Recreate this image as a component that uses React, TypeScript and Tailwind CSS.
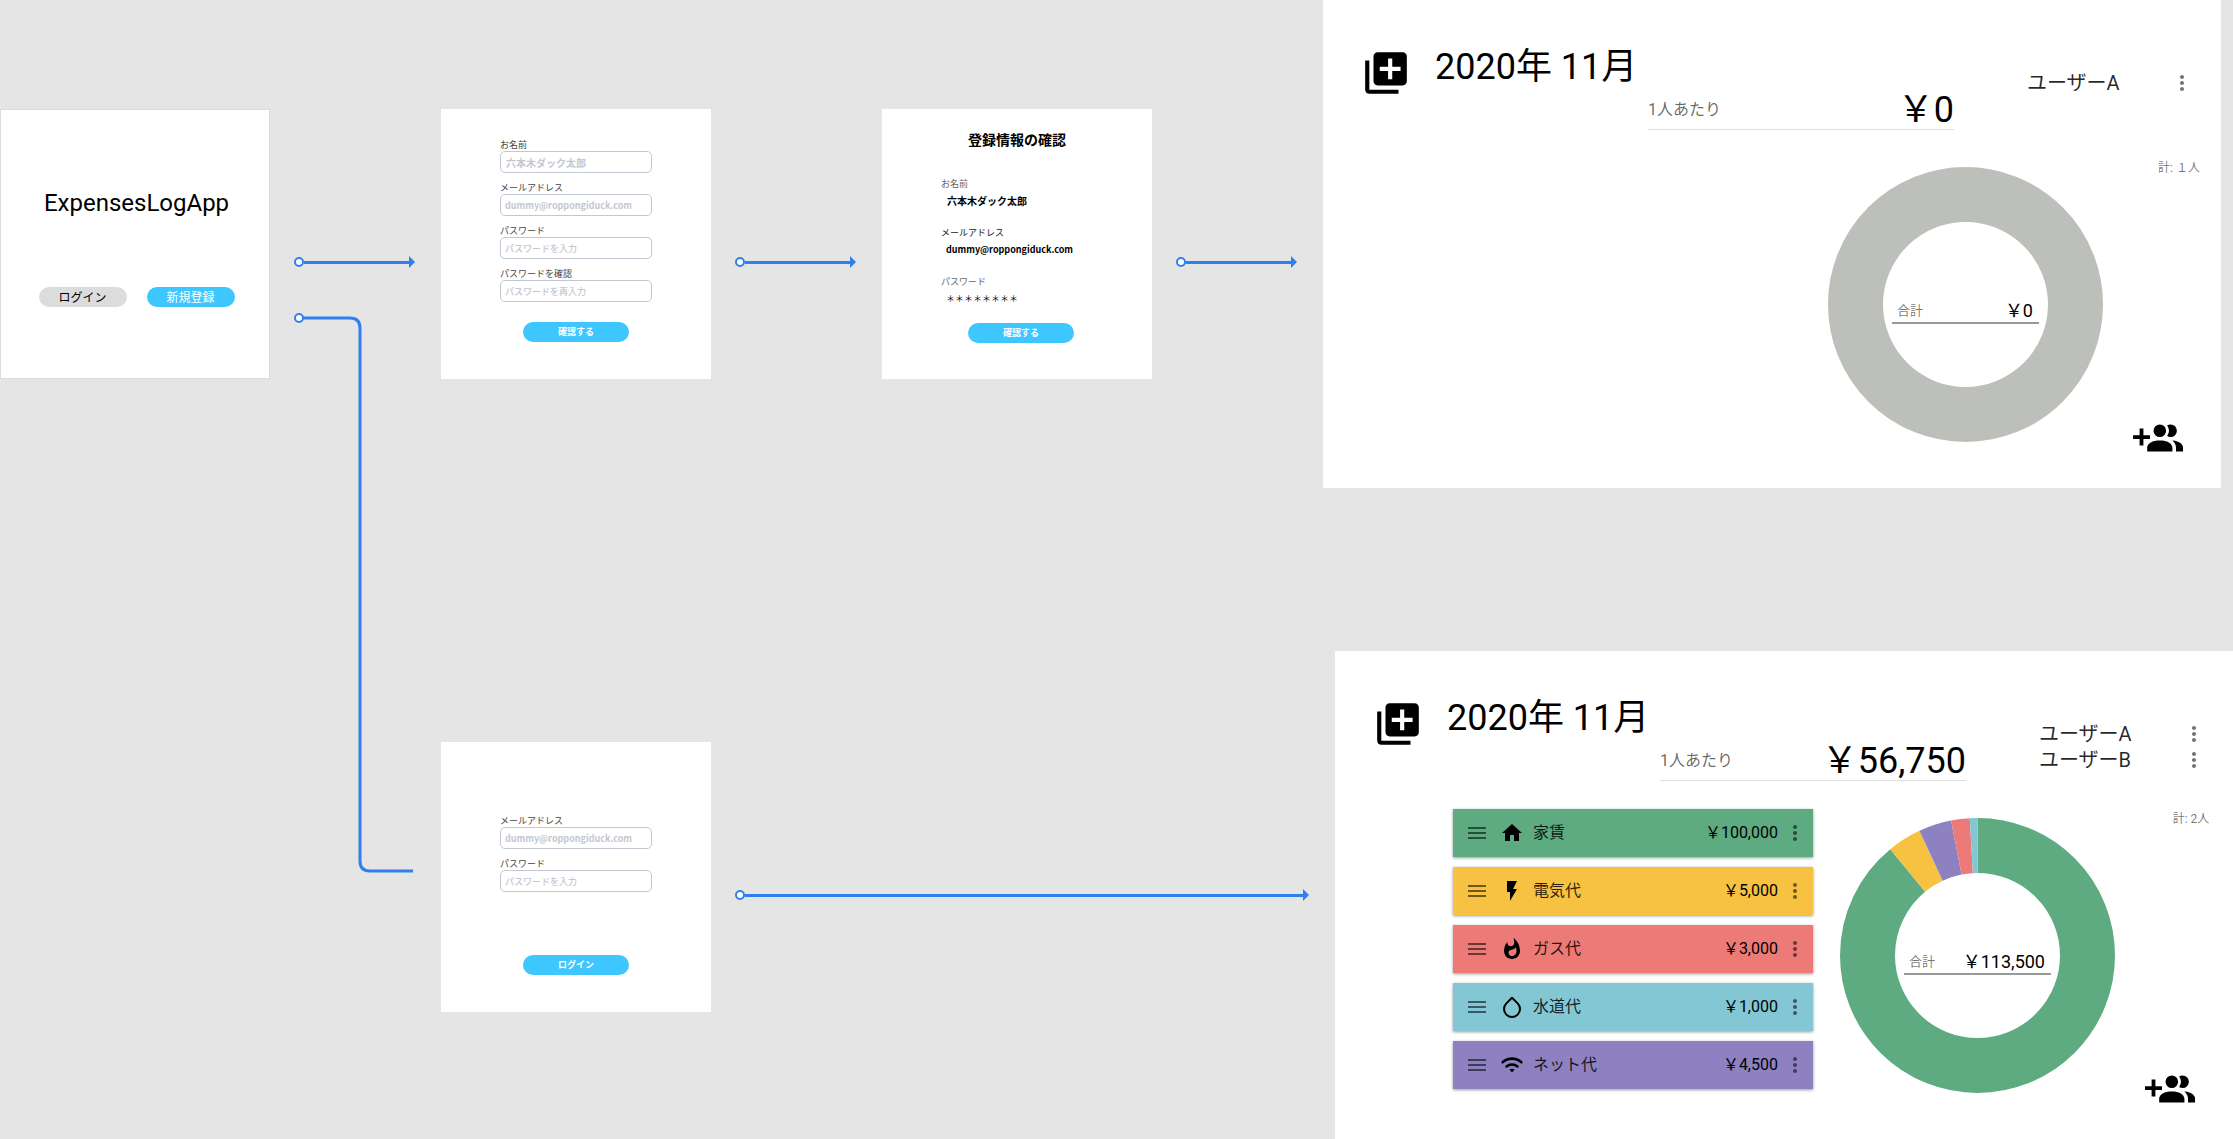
import React, { useId } from "react";
import { MdFlashOn, MdHome, MdLibraryAdd, MdMenu, MdMoreVert, MdWhatshot } from "react-icons/md";

const BLUE = "#2f80ed";

function Connector({ className }: { className: string }) {
  return (
    <div className={"absolute flex h-3 items-center " + className}>
      <span className="size-[10px] shrink-0 rounded-full border-2 border-[#2f80ed] bg-white" />
      <span className="h-[3px] grow bg-[#2f80ed]" />
      <svg className="h-3 w-[6px] shrink-0" viewBox="0 0 6 12" aria-hidden="true">
        <path d="M0 0L6 6L0 12Z" fill={BLUE} />
      </svg>
    </div>
  );
}

function ElbowConnector() {
  return (
    <svg className="absolute left-[294px] top-[313px] h-[564px] w-[120px]" viewBox="0 0 120 564" fill="none" aria-hidden="true">
      <path d="M9 5H56Q66 5 66 15V548Q66 558 76 558H119" stroke={BLUE} strokeWidth="3" />
      <circle cx="5" cy="5" r="4" fill="#fff" stroke={BLUE} strokeWidth="2" />
    </svg>
  );
}

function DropIcon() {
  return (
    <svg className="size-6" viewBox="0 0 24 24" fill="none" stroke="currentColor" strokeWidth="2" strokeLinejoin="round" strokeLinecap="round" aria-hidden="true">
      <path d="M12 2.69l5.66 5.66a8 8 0 1 1-11.31 0z" />
    </svg>
  );
}

function WifiIcon() {
  return (
    <svg className="size-6" viewBox="0 0 24 24" fill="none" stroke="currentColor" strokeWidth="2.6" strokeLinecap="round" aria-hidden="true">
      <path d="M2.6 9.2C8 4.4 16 4.4 21.4 9.2" />
      <path d="M6.5 13.4C9.6 10.8 14.4 10.8 17.5 13.4" />
      <path d="M9.4 16.6C10.9 15.3 13.1 15.3 14.6 16.6L12 19.6Z" fill="currentColor" stroke="none" />
    </svg>
  );
}

function AddMembersIcon() {
  return (
    <svg className="h-7 w-[50px]" viewBox="0 0 50 28" fill="currentColor" aria-hidden="true">
      <path d="M0 11.2H6.6V4.4H10.4V11.2H17V15H10.4V21.4H6.6V15H0Z" />
      <g transform="translate(10.6 -6.8) scale(1.8)">
        <path d="M16 17V19H2V17S2 13 9 13 16 17 16 17M12.5 7.5A3.5 3.5 0 1 0 9 11A3.5 3.5 0 0 0 12.5 7.5M15.94 13A5.32 5.32 0 0 1 18 17V19H22V17S22 13.37 15.94 13M15 4A3.39 3.39 0 0 0 13.07 4.59A5 5 0 0 1 13.07 10.41A3.39 3.39 0 0 0 15 11A3.5 3.5 0 0 0 15 4Z" />
      </g>
    </svg>
  );
}

type FieldProps = { label: string; placeholder: string; type: string };

const inputText: Record<string, string> = {
  text: "px-[5px] text-[10px] font-bold",
  email: "px-1 text-[9px] font-bold",
  password: "px-1 text-[9px] font-medium",
};

function Field({ label, placeholder, type }: FieldProps) {
  const id = useId();
  return (
    <div className="flex flex-col">
      <label htmlFor={id} className="h-[14px] text-[9px] leading-4 text-[#444]">
        {label}
      </label>
      <input
        id={id}
        type={type}
        placeholder={placeholder}
        className={
          "h-[22px] w-full rounded-[5px] border border-[#c3c7d1] bg-white outline-none placeholder:text-[#c3c7d1] " +
          inputText[type]
        }
      />
    </div>
  );
}

function PrimaryButton({ children }: { children: React.ReactNode }) {
  return (
    <button type="button" className="block h-5 w-[106px] rounded-full bg-[#3ec6ff] text-[9px] font-bold text-white">
      {children}
    </button>
  );
}

const dashboardItems = [
  { name: "家賃", amount: "￥100,000", bg: "bg-[#5eab81]", icon: <MdHome className="size-6" /> },
  { name: "電気代", amount: "￥5,000", bg: "bg-[#f7c242]", icon: <MdFlashOn className="size-6" /> },
  { name: "ガス代", amount: "￥3,000", bg: "bg-[#ec7a77]", icon: <MdWhatshot className="size-6" /> },
  { name: "水道代", amount: "￥1,000", bg: "bg-[#82c7d3]", icon: <DropIcon /> },
  { name: "ネット代", amount: "￥4,500", bg: "bg-[#8d81c2]", icon: <WifiIcon /> },
];
type Item = (typeof dashboardItems)[number];

// Sweep of each slice in degrees, clockwise from the top.
const slices = [
  { color: "#5eab81", degrees: 320.6 },
  { color: "#f7c242", degrees: 14.4 },
  { color: "#8d81c2", degrees: 13.9 },
  { color: "#ec7a77", degrees: 7.8 },
  { color: "#82c7d3", degrees: 3.3 },
];
const emptySlices = [{ color: "#bdbfba", degrees: 360 }];
type Slice = (typeof slices)[number];

function Donut({ data, total }: { data: Slice[]; total: string }) {
  let start = 0;
  return (
    <div className="relative mt-[9px] size-[275px] shrink-0">
      <svg className="size-full -rotate-90" viewBox="0 0 275 275" fill="none" aria-hidden="true">
        {data.map((d) => {
          const offset = start;
          start += d.degrees;
          return (
            <circle
              key={d.color}
              cx="137.5"
              cy="137.5"
              r="110"
              stroke={d.color}
              strokeWidth="55"
              pathLength={360}
              strokeDasharray={`${d.degrees} ${360 - d.degrees}`}
              strokeDashoffset={-offset}
            />
          );
        })}
      </svg>
      <div className="absolute inset-x-16 top-[133px] flex h-[24px] items-center justify-between border-b-2 border-[#999] pl-[5px] pr-[6px]">
        <span className="text-[13px] text-black/55">合計</span>
        <span className="text-lg text-black">{total}</span>
      </div>
    </div>
  );
}

type DashboardProps = {
  className: string;
  perPerson: string;
  users: string[];
  count: string;
  total: string;
  items: Item[];
  data: Slice[];
};

function Dashboard({ className, perPerson, users, count, total, items, data }: DashboardProps) {
  return (
    <section className={"absolute flex w-[898px] flex-col bg-white pb-[36px] " + className}>
      <header className="flex items-start pr-[27px]">
        <button type="button" aria-label="追加" className="ml-[38px] mt-12">
          <MdLibraryAdd className="size-[50px]" />
        </button>
        <h1 className="ml-6 mt-[46px] w-[213px] whitespace-nowrap text-4xl leading-[42px]">2020年 11月</h1>
        <div className="mt-[90px] flex h-[40px] w-[306px] items-center justify-between border-b border-[#dedede]">
          <span className="text-base text-black/60">1人あたり</span>
          <span className="text-4xl">{perPerson}</span>
        </div>
        <ul className="ml-[73px] mt-[70px] h-[60px] grow">
          {users.map((user) => (
            <li key={user} className="flex h-[26px] items-center justify-between text-xl text-black/85">
              {user}
              <button type="button" aria-label={user + "のメニュー"} className="text-black/55">
                <MdMoreVert className="size-6" />
              </button>
            </li>
          ))}
        </ul>
      </header>
      <div className="mt-7 flex justify-end">
        {items.length > 0 && (
          <ul className="mr-[27px] flex w-[360px] flex-col gap-[10px]">
            {items.map((item) => (
              <li
                key={item.name}
                className={"flex h-12 items-center pl-3 pr-[6px] shadow-[0_1px_3px_rgba(0,0,0,0.4)] " + item.bg}
              >
                <MdMenu className="size-6 text-black/55" />
                <span className="ml-[11px]">{item.icon}</span>
                <span className="ml-[9px] grow text-base text-black/85">{item.name}</span>
                <span className="text-base">{item.amount}</span>
                <button type="button" aria-label={item.name + "のメニュー"} className="ml-[5px] text-black/55">
                  <MdMoreVert className="size-6" />
                </button>
              </li>
            ))}
          </ul>
        )}
        <Donut data={data} total={total} />
        <aside className="flex h-[294px] w-[118px] flex-col justify-between pl-[30px] pr-[10px]">
          <p className="w-16 self-end text-center text-xs leading-5 text-black/55">{count}</p>
          <button type="button" aria-label="メンバーを追加" className="self-start">
            <AddMembersIcon />
          </button>
        </aside>
      </div>
    </section>
  );
}

const confirmation = [
  { label: "お名前", value: "六本木ダック太郎", labelClass: "text-[#666]", valueClass: "pl-[6px] text-[10px] font-bold" },
  { label: "メールアドレス", value: "dummy@roppongiduck.com", labelClass: "text-[#222]", valueClass: "pl-[5px] text-[9px] font-bold" },
  { label: "パスワード", value: "＊＊＊＊＊＊＊＊", labelClass: "text-[#666]", valueClass: "pl-[5px] text-[9px]" },
];

export default function App() {
  return (
    <main className="relative min-h-screen w-full overflow-hidden bg-[#e5e5e5] font-['Noto_Sans_CJK_JP',sans-serif] text-black">
      <section className="absolute left-0 top-[109px] flex size-[270px] flex-col items-center border border-[#dcdcdc] bg-white pl-[3px] pt-[79px]">
        <h1 className="font-[Roboto,sans-serif] text-2xl leading-7">ExpensesLogApp</h1>
        <div className="mt-[70px] flex gap-5">
          <button type="button" className="h-5 w-[88px] rounded-full bg-[#dcdcdc] text-xs">
            ログイン
          </button>
          <button type="button" className="h-5 w-[88px] rounded-full bg-[#3ec6ff] text-xs text-white">
            新規登録
          </button>
        </div>
      </section>

      <form className="absolute left-[441px] top-[109px] flex size-[270px] flex-col items-center bg-white px-[59px] pt-7">
        <div className="mb-5 flex w-full flex-col gap-[7px]">
          <Field label="お名前" placeholder="六本木ダック太郎" type="text" />
          <Field label="メールアドレス" placeholder="dummy@roppongiduck.com" type="email" />
          <Field label="パスワード" placeholder="パスワードを入力" type="password" />
          <Field label="パスワードを確認" placeholder="パスワードを再入力" type="password" />
        </div>
        <PrimaryButton>確認する</PrimaryButton>
      </form>

      <section className="absolute left-[882px] top-[109px] flex size-[270px] flex-col bg-white pt-5">
        <h2 className="text-center text-sm font-bold leading-5">登録情報の確認</h2>
        <dl className="mt-7 flex flex-col gap-[17px] pl-[59px]">
          {confirmation.map((row) => (
            <div key={row.label}>
              <dt className={"text-[9px] leading-[14px] " + row.labelClass}>{row.label}</dt>
              <dd className={"mt-[2px] leading-4 " + row.valueClass}>{row.value}</dd>
            </div>
          ))}
        </dl>
        <div className="mt-4 pl-[86px]">
          <PrimaryButton>確認する</PrimaryButton>
        </div>
      </section>

      <form className="absolute left-[441px] top-[742px] flex size-[270px] flex-col items-center bg-white px-[59px] pt-[71px]">
        <div className="mb-[63px] flex w-full flex-col gap-[7px]">
          <Field label="メールアドレス" placeholder="dummy@roppongiduck.com" type="email" />
          <Field label="パスワード" placeholder="パスワードを入力" type="password" />
        </div>
        <PrimaryButton>ログイン</PrimaryButton>
      </form>

      <div className="contents font-[Roboto,'Noto_Sans_CJK_JP',sans-serif]">
        <Dashboard
          className="left-[1323px] top-0"
          perPerson="￥0"
          users={["ユーザーA"]}
          count="計: １人"
          total="￥0"
          items={[]}
          data={emptySlices}
        />
        <Dashboard
          className="left-[1335px] top-[651px]"
          perPerson="￥56,750"
          users={["ユーザーA", "ユーザーB"]}
          count="計: 2人"
          total="￥113,500"
          items={dashboardItems}
          data={slices}
        />
      </div>

      <Connector className="left-[294px] top-[256px] w-[121px]" />
      <Connector className="left-[735px] top-[256px] w-[121px]" />
      <Connector className="left-[1176px] top-[256px] w-[121px]" />
      <Connector className="left-[735px] top-[889px] w-[574px]" />
      <ElbowConnector />
    </main>
  );
}
